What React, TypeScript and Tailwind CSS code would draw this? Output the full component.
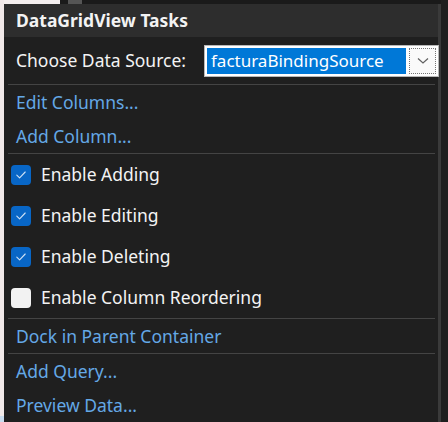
import React from 'react';

// Dark smart-tag panel, Visual Studio style
const Separator = () => <div className="ml-[4px] mr-[3px] h-px shrink-0 bg-[#444444]" />;

const LinkRow = ({ text }: { text: string }) => (
    <div className="flex h-[34px] shrink-0 items-center pl-[12px] text-[17.5px] text-[#64a8e6]">{text}</div>
);

const CheckRow = ({ label, checked }: { label: string; checked: boolean }) => (
    <div className="flex h-[41px] shrink-0 items-center pl-[7px]">
        {checked ? (
            <div className="flex h-[20px] w-[20px] items-center justify-center rounded-[4px] bg-[#0866c6]">
                <svg width="12" height="10" viewBox="0 0 12 10" fill="none">
                    <path d="M1.8 5.2 L4.6 7.8 L10.2 2" stroke="#cfe2f6" strokeWidth="1.1" strokeLinecap="round" strokeLinejoin="round" />
                </svg>
            </div>
        ) : (
            <div className="h-[20px] w-[20px] rounded-[4px] bg-[#f2f2f2]" />
        )}
        <span className="ml-[10px] text-[17.5px] text-[#f3f3f3]">{label}</span>
    </div>
);

export default function App() {
    return (
        <div
            className="flex h-[422px] w-[448px] overflow-hidden bg-[#1e1e1e]"
            style={{ fontFamily: '"Noto Sans", "Open Sans", sans-serif' }}
        >
            {/* left strip of the designer behind */}
            <div className="flex w-[4px] shrink-0 flex-col bg-[#f1e9e9]">
                <div className="flex-1" />
                <div className="h-[6px] bg-[#c9dcef]" />
            </div>
            <div className="flex w-[437px] shrink-0 flex-col bg-[#1f1f1f]">
                {/* top strip */}
                <div className="flex h-[4px] shrink-0 bg-[#1a1a1a]">
                    <div className="w-[56px] bg-[#f4eeee]" />
                    <div className="ml-[8px] w-[14px] bg-[#555555]" />
                </div>
                <div className="flex min-h-0 flex-1 border-r-[3px] border-[#3a3a3a] bg-[#1f1f1f]">
                    <div className="flex flex-1 flex-col">
                        {/* header */}
                        <div className="flex h-[33px] shrink-0 items-center bg-[#2d2d2d] pl-[12px] text-[17.5px] font-bold text-[#f3f3f3]">
                            DataGridView Tasks
                        </div>
                        <div className="flex h-[47px] shrink-0 items-center pl-[12px]">
                            <span className="text-[17.5px] text-[#f3f3f3]">Choose Data Source:</span>
                            <div className="ml-auto mr-[-1px] flex h-[32px] w-[235px] items-center border border-[#b8b8b8] bg-white p-[2px]">
                                <div className="flex h-full flex-1 items-center bg-[#0078d7] pl-[4px] text-[17px] text-white">
                                    facturaBindingSource
                                </div>
                                <div className="ml-[3px] flex h-full w-[27px] items-center justify-center border border-dotted border-[#777777] bg-[#fafafa]">
                                    <svg width="12" height="8" viewBox="0 0 12 8" fill="none">
                                        <path d="M1 1.5 L6 6 L11 1.5" stroke="#606060" strokeWidth="1.2" />
                                    </svg>
                                </div>
                            </div>
                        </div>
                        <Separator />
                        <LinkRow text="Edit Columns..." />
                        <LinkRow text="Add Column..." />
                        <Separator />
                        <CheckRow label="Enable Adding" checked />
                        <CheckRow label="Enable Editing" checked />
                        <CheckRow label="Enable Deleting" checked />
                        <CheckRow label="Enable Column Reordering" checked={false} />
                        <Separator />
                        <LinkRow text="Dock in Parent Container" />
                        <Separator />
                        <LinkRow text="Add Query..." />
                        <LinkRow text="Preview Data..." />
                    </div>
                </div>
            </div>
        </div>
    );
}
